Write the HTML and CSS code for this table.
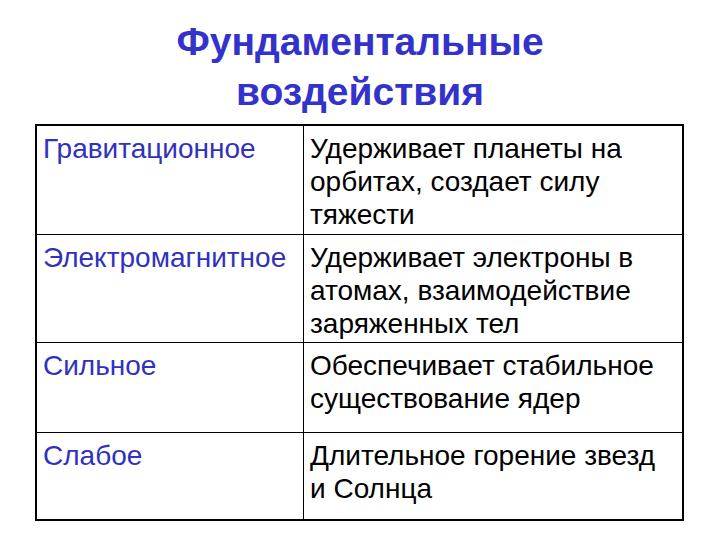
FILE: index.html
```html
<!DOCTYPE html>
<html lang="ru">
<head>
<meta charset="utf-8">
<title>Фундаментальные воздействия</title>
<link rel="stylesheet" href="styles.css">
</head>
<body>
<main class="slide">
  <h1 class="title">Фундаментальные<br>воздействия</h1>
  <table class="forces">
    <tr class="row-a">
      <td class="name">Гравитационное</td>
      <td class="desc">Удерживает планеты на орбитах, создает силу тяжести</td>
    </tr>
    <tr class="row-b">
      <td class="name">Электромагнитное</td>
      <td class="desc">Удерживает электроны в атомах, взаимодействие заряженных тел</td>
    </tr>
    <tr class="row-c">
      <td class="name">Сильное</td>
      <td class="desc">Обеспечивает стабильное существование ядер</td>
    </tr>
    <tr class="row-d">
      <td class="name">Слабое</td>
      <td class="desc">Длительное горение звезд и Солнца</td>
    </tr>
  </table>
</main>
</body>
</html>
```

FILE: styles.css
```css
html, body {
  margin: 0;
  padding: 0;
  background: #ffffff;
}

.slide {
  width: 720px;
  height: 540px;
  box-sizing: border-box;
  padding: 17px 35px 0 35px;
  font-family: "Liberation Sans", Arial, sans-serif;
}

.title {
  margin: 0;
  text-align: center;
  font-size: 39px;
  font-weight: bold;
  line-height: 50px;
  color: #3333cc;
}

.forces {
  margin-top: 7px;
  width: 649px;
  border-collapse: collapse;
  border: 2px solid #000;
  font-size: 28px;
  line-height: 33px;
}

.forces td {
  vertical-align: top;
  border: 1px solid #000;
  padding: 6px 6px 0 6px;
}

.forces .name {
  width: 254px;
  color: #3131c0;
}

.forces .desc {
  color: #000;
}

.row-a td {
  height: 102px;
}

.row-b td {
  height: 101px;
}

.row-c td {
  height: 83px;
}

.row-d td {
  height: 80px;
}
```
